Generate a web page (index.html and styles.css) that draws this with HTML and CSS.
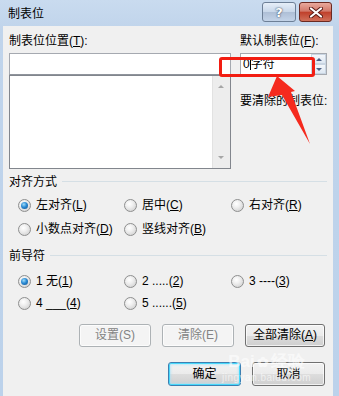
FILE: index.html
```html
<!DOCTYPE html>
<html>
<head>
<meta charset="utf-8">
<title>制表位</title>
<link rel="stylesheet" href="styles.css">
</head>
<body>
<div class="window">
    <div class="titlebar">
        <span class="title">制表位</span>
        <div class="caption_btns">
            <span class="cbtn help">?</span>
            <span class="cbtn close">
                <svg width="14" height="11" viewBox="0 0 14 11"><path d="M2 1.5 L12 9.5 M12 1.5 L2 9.5" stroke="#5a1a14" stroke-width="4" stroke-linecap="round"/><path d="M2 1.5 L12 9.5 M12 1.5 L2 9.5" stroke="#ffffff" stroke-width="2.2" stroke-linecap="round"/></svg>
            </span>
        </div>
    </div>

    <div class="client">
        <div class="top">
            <div class="left_col">
                <div class="label">制表位位置(<u>T</u>):</div>
                <div class="pos_input"></div>
                <div class="pos_list">
                    <div class="scroll">
                        <span class="arr up"></span>
                        <span class="arr down"></span>
                    </div>
                </div>
            </div>
            <div class="right_col">
                <div class="label">默认制表位(<u>F</u>):</div>
                <div class="spin">
                    <span class="spin_text">0<span class="caret"></span>字符</span>
                    <div class="spin_btns">
                        <span class="sbtn"><i class="tri up"></i></span>
                        <span class="sbtn"><i class="tri down"></i></span>
                    </div>
                </div>
                <div class="label clear_label">要清除的制表位:</div>
            </div>
        </div>

        <div class="group_head first">
            <span>对齐方式</span>
            <span class="rule"></span>
        </div>
        <div class="options align">
            <label class="opt"><span class="radio checked"></span><span>左对齐(<u>L</u>)</span></label>
            <label class="opt"><span class="radio"></span><span>居中(<u>C</u>)</span></label>
            <label class="opt"><span class="radio"></span><span>右对齐(<u>R</u>)</span></label>
            <label class="opt"><span class="radio"></span><span>小数点对齐(<u>D</u>)</span></label>
            <label class="opt"><span class="radio"></span><span>竖线对齐(<u>B</u>)</span></label>
        </div>

        <div class="group_head second">
            <span>前导符</span>
            <span class="rule"></span>
        </div>
        <div class="options leader">
            <label class="opt"><span class="radio checked"></span><span>1 无(<u>1</u>)</span></label>
            <label class="opt"><span class="radio"></span><span>2 .....(<u>2</u>)</span></label>
            <label class="opt"><span class="radio"></span><span>3 ----(<u>3</u>)</span></label>
            <label class="opt"><span class="radio"></span><span>4 ___(<u>4</u>)</span></label>
            <label class="opt"><span class="radio"></span><span>5 ......(<u>5</u>)</span></label>
        </div>

        <div class="btn_row">
            <span class="btn disabled w72">设置(S)</span>
            <span class="btn disabled w72">清除(E)</span>
            <span class="btn w80">全部清除(<u>A</u>)</span>
        </div>
        <div class="btn_row ok_row">
            <span class="btn default w73">确定</span>
            <span class="btn w73">取消</span>
        </div>
    </div>

    <!-- red annotation drawn over the dialog -->
    <div class="mark_box"></div>
    <svg class="mark_arrow" width="60" height="80" viewBox="0 0 60 80">
        <polygon points="12,0 30,15 26,16 45,68 17,19 3,21" fill="#f52a1e"/>
    </svg>

    <div class="watermark">
        <div class="wm_top">Bai<span class="paw">✿</span>经验</div>
        <div class="wm_bottom">jingyan.baidu.com</div>
    </div>
</div>
</body>
</html>
```

FILE: styles.css
```css
body {
    margin: 0;
    font-family: "Liberation Sans", "Noto Sans CJK SC", sans-serif;
    font-size: 12px;
    color: #000000;
    background-color: #c3d6ed;
}

u {
    text-decoration: underline;
    text-underline-offset: 1px;
}

.window {
    position: relative;
    width: 339px;
    height: 396px;
    overflow: hidden;
    background: linear-gradient(to bottom, #c9dbef 0, #c0d4eb 30px, #bcd2eb 100%);
}

.titlebar {
    height: 26px;
    display: flex;
    align-items: flex-start;
    justify-content: space-between;
}
.title {
    margin-left: 8px;
    margin-top: 6px;
    line-height: 16px;
    font-size: 12px;
}
.caption_btns {
    display: flex;
    gap: 3px;
    margin-top: 2px;
    margin-right: 7px;
}
.cbtn {
    height: 18px;
    border-radius: 3px;
    display: flex;
    align-items: center;
    justify-content: center;
}
.help {
    width: 32px;
    border: 1px solid #6d7f96;
    background: linear-gradient(to bottom, #e6eef8 0, #c9d8ea 48%, #aebfd6 52%, #c3d3e8 100%);
    color: #ffffff;
    font-family: "DejaVu Sans", sans-serif;
    font-weight: 700;
    font-size: 13px;
    text-shadow: 0 0 2px #3d5069, 0 0 1px #3d5069;
}
.close {
    width: 31px;
    border: 1px solid #6b2a22;
    background: linear-gradient(to bottom, #e9a99c 0, #d2796a 45%, #c0412c 52%, #d0705a 100%);
}

.client {
    margin-left: 3px;
    width: 330px;
    height: 370px;
    background-color: #f0f0f0;
    padding-top: 7px;
    box-sizing: border-box;
}

.top {
    display: flex;
    padding-left: 6px;
    gap: 9px;
}
.left_col {
    width: 222px;
}
.right_col {
    width: 87px;
}
.label {
    line-height: 16px;
    height: 16px;
    white-space: nowrap;
}
.pos_input {
    margin-top: 4px;
    height: 20px;
    border: 1px solid #a5a9b0;
    border-bottom-color: #8f949c;
    background-color: #ffffff;
}
.pos_list {
    height: 92px;
    border: 1px solid #82868d;
    background-color: #ffffff;
    display: flex;
    justify-content: flex-end;
}
.scroll {
    width: 17px;
    background-color: #ededed;
    border-left: 1px solid #e2e2e2;
    position: relative;
}
.arr {
    position: absolute;
    left: 5px;
    width: 0;
    height: 0;
    border-left: 3px solid transparent;
    border-right: 3px solid transparent;
}
.arr.up {
    top: 9px;
    border-bottom: 3px solid #a6a6a6;
}
.arr.down {
    bottom: 9px;
    border-top: 3px solid #a6a6a6;
}

.spin {
    margin-top: 4px;
    height: 20px;
    border: 1px solid #a5a9b0;
    background-color: #ffffff;
    display: flex;
    justify-content: space-between;
}
.spin_text {
    padding-left: 2px;
    line-height: 20px;
    white-space: nowrap;
}
.caret {
    display: inline-block;
    width: 1px;
    height: 13px;
    background-color: #000000;
    vertical-align: -2px;
}
.spin_btns {
    width: 15px;
    display: flex;
    flex-direction: column;
}
.sbtn {
    flex: 1;
    border: 1px solid #c9d5e2;
    background: linear-gradient(to bottom, #f4f7fb, #dde7f2);
    display: flex;
    align-items: center;
    justify-content: center;
}
.tri {
    width: 0;
    height: 0;
    border-left: 3px solid transparent;
    border-right: 3px solid transparent;
}
.tri.up {
    border-bottom: 3px solid #4d6185;
}
.tri.down {
    border-top: 3px solid #4d6185;
}
.clear_label {
    margin-top: 18px;
}

.group_head {
    display: flex;
    align-items: center;
    gap: 5px;
    padding-left: 6px;
    padding-right: 6px;
    line-height: 16px;
}
.group_head.first {
    margin-top: 5px;
}
.group_head.second {
    margin-top: 11px;
}
.rule {
    flex: 1;
    height: 1px;
    margin-top: -1px;
    background-color: #d5dfe5;
}

.options {
    display: grid;
    grid-template-columns: 106px 107px 1fr;
    padding-left: 15px;
}
.options.align {
    margin-top: 7px;
    row-gap: 8px;
}
.options.leader {
    margin-top: 9px;
    row-gap: 6px;
}
.opt {
    display: flex;
    align-items: center;
    gap: 5px;
    line-height: 16px;
    white-space: nowrap;
}
.radio {
    width: 11px;
    height: 11px;
    border-radius: 50%;
    border: 1px solid #8e8f8f;
    background: radial-gradient(circle at 40% 35%, #ffffff 0, #f0f0f0 35%, #c9c9c9 100%);
    position: relative;
    flex: none;
}
.radio.checked::after {
    content: "";
    position: absolute;
    left: 2px;
    top: 2px;
    width: 7px;
    height: 7px;
    border-radius: 50%;
    background: radial-gradient(circle at 40% 35%, #9fdcf8 0, #2a8ad4 45%, #0f4f8a 100%);
}

.btn_row {
    display: flex;
    justify-content: flex-end;
    gap: 11px;
    padding-right: 8px;
    margin-top: 13px;
}
.ok_row {
    margin-top: 15px;
}
.btn {
    height: 21px;
    line-height: 21px;
    text-align: center;
    border: 1px solid #707070;
    border-radius: 3px;
    background: linear-gradient(to bottom, #f2f2f2 0, #ebebeb 50%, #dddddd 51%, #cfcfcf 100%);
    box-shadow: inset 0 0 0 1px rgba(255, 255, 255, 0.7);
}
.ok_row .btn {
    height: 22px;
    line-height: 22px;
}
.w72 { width: 70px; }
.w73 { width: 71px; }
.w80 { width: 78px; }
.btn.disabled {
    color: #838383;
    border-color: #adb2b5;
    background: #f4f4f4;
}
.btn.default {
    border-color: #3c7fb1;
    box-shadow: inset 0 0 0 1px #48d8fb, inset 0 0 2px 2px rgba(160, 225, 250, 0.6);
}

.mark_box {
    position: absolute;
    left: 219px;
    top: 57px;
    width: 90px;
    height: 14px;
    border: 3px solid #f21d12;
    border-radius: 3px;
}
.mark_arrow {
    position: absolute;
    left: 265px;
    top: 76px;
}

.watermark {
    position: absolute;
    left: 222px;
    top: 352px;
    color: rgba(255, 255, 255, 0.6);
    font-family: "Liberation Sans", sans-serif;
    text-align: center;
}
.wm_top {
    font-size: 17px;
    font-weight: 700;
    line-height: 20px;
}
.paw {
    font-size: 14px;
    margin: 0 2px;
}
.wm_bottom {
    font-size: 10px;
    line-height: 12px;
    letter-spacing: 0.5px;
}
```
